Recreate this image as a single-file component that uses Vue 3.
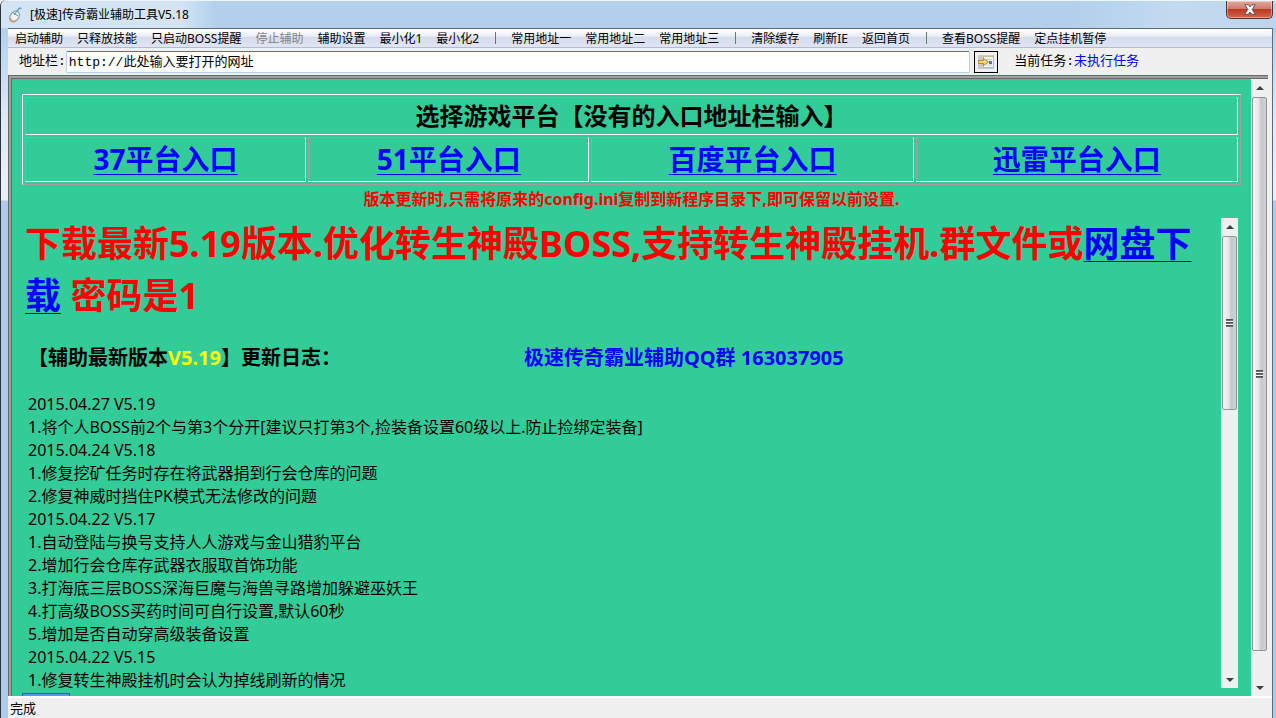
<script setup>
import { ref } from 'vue'

const address = ref('http://此处输入要打开的网址')

// 菜单项，'|' 为分隔符
const menus = [
  { text: '启动辅助' },
  { text: '只释放技能' },
  { text: '只启动BOSS提醒' },
  { text: '停止辅助', disabled: true },
  { text: '辅助设置' },
  { text: '最小化1' },
  { text: '最小化2' },
  { text: '|', color: 'purple' },
  { text: '常用地址一' },
  { text: '常用地址二' },
  { text: '常用地址三' },
  { text: '|', color: 'green' },
  { text: '清除缓存' },
  { text: '刷新IE' },
  { text: '返回首页' },
  { text: '|', color: 'green' },
  { text: '查看BOSS提醒' },
  { text: '定点挂机暂停' }
]

const platforms = ['37平台入口', '51平台入口', '百度平台入口', '迅雷平台入口']

const logs = [
  '2015.04.27 V5.19',
  '1.将个人BOSS前2个与第3个分开[建议只打第3个,捡装备设置60级以上.防止捡绑定装备]',
  '2015.04.24 V5.18',
  '1.修复挖矿任务时存在将武器捐到行会仓库的问题',
  '2.修复神威时挡住PK模式无法修改的问题',
  '2015.04.22 V5.17',
  '1.自动登陆与换号支持人人游戏与金山猎豹平台',
  '2.增加行会仓库存武器衣服取首饰功能',
  '3.打海底三层BOSS深海巨魔与海兽寻路增加躲避巫妖王',
  '4.打高级BOSS买药时间可自行设置,默认60秒',
  '5.增加是否自动穿高级装备设置',
  '2015.04.22 V5.15',
  '1.修复转生神殿挂机时会认为掉线刷新的情况'
]

// 滑块占轨道的百分比
const pageThumb = 95
const logThumb = 40
</script>

<template>
  <div class="window">
    <header class="titlebar">
      <svg class="app-icon" width="16" height="16" viewBox="0 0 16 16">
        <path d="M8 6C8 3 10 4 10.500 2.500S12 .8 13.500 1.500" fill="none" stroke="#4f9bb5" stroke-width="1.200" />
        <ellipse cx="6.500" cy="9.500" rx="4.200" ry="6" transform="rotate(35 6.500 9.500)" fill="#eef3f5" stroke="#8295a0" />
        <path d="M5 5.500l5 3.500M8.500 4.500L6.500 8" stroke="#5b93ad" fill="none" />
        <path d="M2.500 11c.5 3 3 4 5 2.500" fill="none" stroke="#e09a63" stroke-width="1.500" />
      </svg>
      <span class="title">[极速]传奇霸业辅助工具V5.18</span>
      <button class="close" aria-label="关闭">
        <svg width="12" height="11" viewBox="0 0 12 11">
          <path d="M.8.700h3.400L6 2.900 7.800.700h3.400L8.200 5.500l3 4.800H7.800L6 8.100l-1.800 2.200H.8l3-4.800z" fill="#fff" stroke="#5c4a4a" stroke-width=".9" />
        </svg>
      </button>
    </header>

    <div class="client">
      <nav class="menubar">
        <template v-for="(m, i) in menus" :key="i">
          <span v-if="m.text === '|'" class="sep" :class="m.color"></span>
          <button v-else class="menu" :disabled="m.disabled">{{ m.text }}</button>
        </template>
      </nav>

      <div class="toolbar">
        <label for="address">地址栏:</label>
        <input id="address" v-model="address" type="text" />
        <button class="go" aria-label="转到">
          <svg width="16" height="14" viewBox="0 0 16 14">
            <rect x="0" y="0" width="16" height="14" fill="#c9c9c9" />
            <rect x="5.500" y="1.500" width="10" height="11" fill="#f4f6fb" stroke="#c8b98a" />
            <path d="M6 12.500h9.500V4" fill="none" stroke="#a8b8d8" />
            <path d="M8 4.500h6M8 10h6" stroke="#c4d0e6" fill="none" />
            <rect x="11" y="6" width="3" height="3" fill="#4a78b8" />
            <path d="M.5 5.500h5v-2L10.500 7l-5 3.500v-2h-5z" fill="#f8d878" stroke="#b88a28" />
          </svg>
        </button>
        <span class="task">当前任务:<span class="task-value">未执行任务</span></span>
      </div>

      <div class="browser">
        <main class="page">
          <table class="platforms">
            <thead>
              <tr>
                <th colspan="4">选择游戏平台【没有的入口地址栏输入】</th>
              </tr>
            </thead>
            <tbody>
              <tr>
                <td v-for="p in platforms" :key="p"><a href="#">{{ p }}</a></td>
              </tr>
            </tbody>
          </table>
          <p class="notice">版本更新时,只需将原来的config.ini复制到新程序目录下,即可保留以前设置.</p>

          <section class="news">
            <div class="news-body">
              <h1>下载最新5.19版本.优化转生神殿BOSS,支持转生神殿挂机.群文件或<a href="#">网盘下载</a> 密码是1</h1>
              <h2>
                <span>【辅助最新版本<span class="version">V5.19</span>】更新日志：</span>
                <span class="group">极速传奇霸业辅助QQ群 163037905</span>
              </h2>
              <ul>
                <li v-for="(line, i) in logs" :key="i">{{ line }}</li>
              </ul>
            </div>
            <div class="scrollbar">
              <span class="arrow up"></span>
              <div class="track">
                <div class="thumb" :style="{ height: logThumb + '%' }"><i></i></div>
              </div>
              <span class="arrow down"></span>
            </div>
          </section>
          <div class="clipped"></div>
        </main>
        <div class="scrollbar">
          <span class="arrow up"></span>
          <div class="track">
            <div class="thumb" :style="{ height: pageThumb + '%' }"><i></i></div>
          </div>
          <span class="arrow down"></span>
        </div>
      </div>

      <footer class="status">完成</footer>
    </div>
  </div>
</template>

<style>
body {
  margin: 0;
}
</style>

<style scoped>
* {
  box-sizing: border-box;
}

.window {
  display: flex;
  flex-direction: column;
  height: 100vh;
  padding: 0 3px 0 7px;
  overflow: hidden;
  border-left: 1px solid #2d333c;
  border-radius: 6px 0 0 0;
  background: linear-gradient(#b2d0ec 0, #b2d0ec 28px, #dfeaf5 120px, #e9f0f8 200px, #b0cbe8 201px);
  font-family: "Noto Sans", "Noto Sans CJK SC", sans-serif;
  color: #000;
}

button {
  font: inherit;
  color: inherit;
}

/* 标题栏 */
.titlebar {
  display: flex;
  align-items: center;
  flex: none;
  height: 28px;
  margin: 0 -3px 0 -7px;
  padding-left: 7px;
  border-top: 1px solid #eef5fc;
  background: linear-gradient(90deg, #d3e4f5 0, #d3e4f5 180px, #b2d0ec 215px, #b2d0ec 84%, #c3daf0 92%, #bdd5ec);
}

.title {
  flex: 1;
  margin-left: 6px;
  font-size: 12px;
  line-height: 16px;
}

.close {
  display: flex;
  align-items: center;
  justify-content: center;
  align-self: flex-start;
  width: 47px;
  height: 18px;
  margin-right: 3px;
  padding: 0;
  border: 1px solid #5d2b28;
  border-top: none;
  border-radius: 0 0 5px 5px;
  box-shadow: inset 0 0 0 1px rgba(255, 255, 255, 0.4);
  background: linear-gradient(#e3a89c 0, #d17b6d 45%, #b93a25 50%, #d4664a 100%);
}

.client {
  display: flex;
  flex: 1;
  flex-direction: column;
  min-height: 0;
  border: 1px solid #5d6b7d;
  border-width: 1px 1px 0 0;
  background: #f0f0f0;
}

/* 菜单 */
.menubar {
  display: flex;
  align-items: center;
  flex: none;
  height: 19px;
  border-bottom: 1px solid #b6bccc;
  background: linear-gradient(#fff 0, #eceff8 40%, #d6dbec 45%, #e0e5f5 100%);
}

.menu {
  padding: 1px 7px 0;
  border: none;
  background: none;
  font-size: 12px;
  line-height: 18px;
  white-space: nowrap;
}

.menu:disabled {
  color: #838383;
}

.sep {
  width: 1px;
  height: 12px;
  margin: 0 8px 0 9px;
}

.sep.purple {
  background: #8c6070;
}

.sep.green {
  background: #608060;
}

/* 地址栏 */
.toolbar {
  display: flex;
  align-items: center;
  flex: none;
  height: 27px;
  padding: 0 133px 0 11px;
  font-family: "Liberation Mono", "Noto Sans CJK SC", monospace;
  font-size: 13px;
  line-height: 20px;
}

.toolbar input {
  flex: 1;
  min-width: 0;
  height: 22px;
  padding: 0 2px 3px;
  border: 1px solid #b5cfe7;
  border-top-color: #3d7bad;
  border-radius: 2px;
  background: #fff;
  font: inherit;
  line-height: 17px;
}

.go {
  display: flex;
  align-items: center;
  justify-content: center;
  width: 24px;
  height: 22px;
  margin: 0 16px 0 4px;
  padding: 0;
  border: 1px solid #000;
  background: #f0f0f0;
}

.task {
  white-space: nowrap;
}

.task-value {
  color: #00f;
}

/* 浏览器区域 */
.browser {
  display: flex;
  flex: 1;
  min-height: 0;
  margin-right: 4px;
  border: 4px double #696969;
  border-width: 4px 0 0 4px;
  background: #a0a0a0;
}

.page {
  display: flex;
  flex: 1;
  flex-direction: column;
  min-width: 0;
  padding: 15px 10px 0;
  overflow: hidden;
  background: #3c9;
}

.platforms {
  flex: none;
  width: 100%;
  border: 1px solid;
  border-color: #fff #a0a0a0 #a0a0a0 #fff;
  border-spacing: 2px;
}

.platforms th,
.platforms td {
  border: 1px solid;
  border-color: #a0a0a0 #fff #fff #a0a0a0;
  padding: 1px;
  text-align: center;
  font-weight: bold;
}

.platforms th {
  font-size: 24px;
  line-height: 34px;
}

.platforms td {
  width: 26.7%;
  font-size: 28px;
  line-height: 41px;
}

.platforms td:nth-child(-n + 2) {
  width: 23.3%;
}

a {
  color: #00f;
  text-decoration-thickness: 1px;
  text-underline-offset: 4px;
}

.notice {
  margin: 3px 0 8px;
  color: #f00;
  font-size: 16px;
  font-weight: bold;
  line-height: 22px;
  text-align: center;
}

.news {
  display: flex;
  flex: 1;
  min-height: 0;
  margin: 0 3px 5px 0;
}

.news-body {
  flex: 1;
  min-width: 0;
  padding-left: 3px;
  overflow: hidden;
}

h1 {
  margin: 0;
  color: #f00;
  font-size: 36px;
  line-height: 52px;
}

h2 {
  display: flex;
  gap: 183px;
  margin: 22px 0 21px 3px;
  font-size: 20px;
  line-height: 28px;
}

.version {
  color: #ff0;
}

.group {
  color: #00f;
}

ul {
  margin: 0 0 0 3px;
  padding: 0;
  list-style: none;
  font-size: 16px;
  line-height: 23px;
}

.clipped {
  flex: none;
  width: 48px;
  height: 3px;
  border: 1px solid #2468a8;
  border-bottom: none;
  background: #4ba0e0;
}

/* 滚动条 */
.scrollbar {
  display: flex;
  flex: none;
  flex-direction: column;
  width: 17px;
  border-left: 1px solid #fff;
  background: #f0f0f0;
}

.arrow {
  display: flex;
  align-items: center;
  justify-content: center;
  height: 17px;
}

.arrow::before {
  content: "";
  border: 4px solid transparent;
}

.arrow.up::before {
  border-top: none;
  border-bottom-color: #404040;
}

.arrow.down::before {
  border-bottom: none;
  border-top-color: #404040;
}

.track {
  flex: 1;
}

.thumb {
  display: flex;
  align-items: center;
  justify-content: center;
  width: 15px;
  margin-top: 1px;
  border: 1px solid #959595;
  border-radius: 2px;
  background: linear-gradient(90deg, #f6f6f6 0, #e6e6e8 45%, #c8c8cc 60%, #d0d0d4 100%);
}

.thumb i {
  width: 7px;
  height: 8px;
  background: repeating-linear-gradient(#505050 0, #505050 1px, #909090 2px, #f4f4f4 2px, #f4f4f4 3px);
}

/* 状态栏 */
.status {
  flex: none;
  height: 22px;
  padding: 3px 2px 0;
  border-top: 2px solid #fff;
  font-family: "Liberation Mono", "Noto Sans CJK SC", monospace;
  font-size: 13px;
  line-height: 18px;
}
</style>
